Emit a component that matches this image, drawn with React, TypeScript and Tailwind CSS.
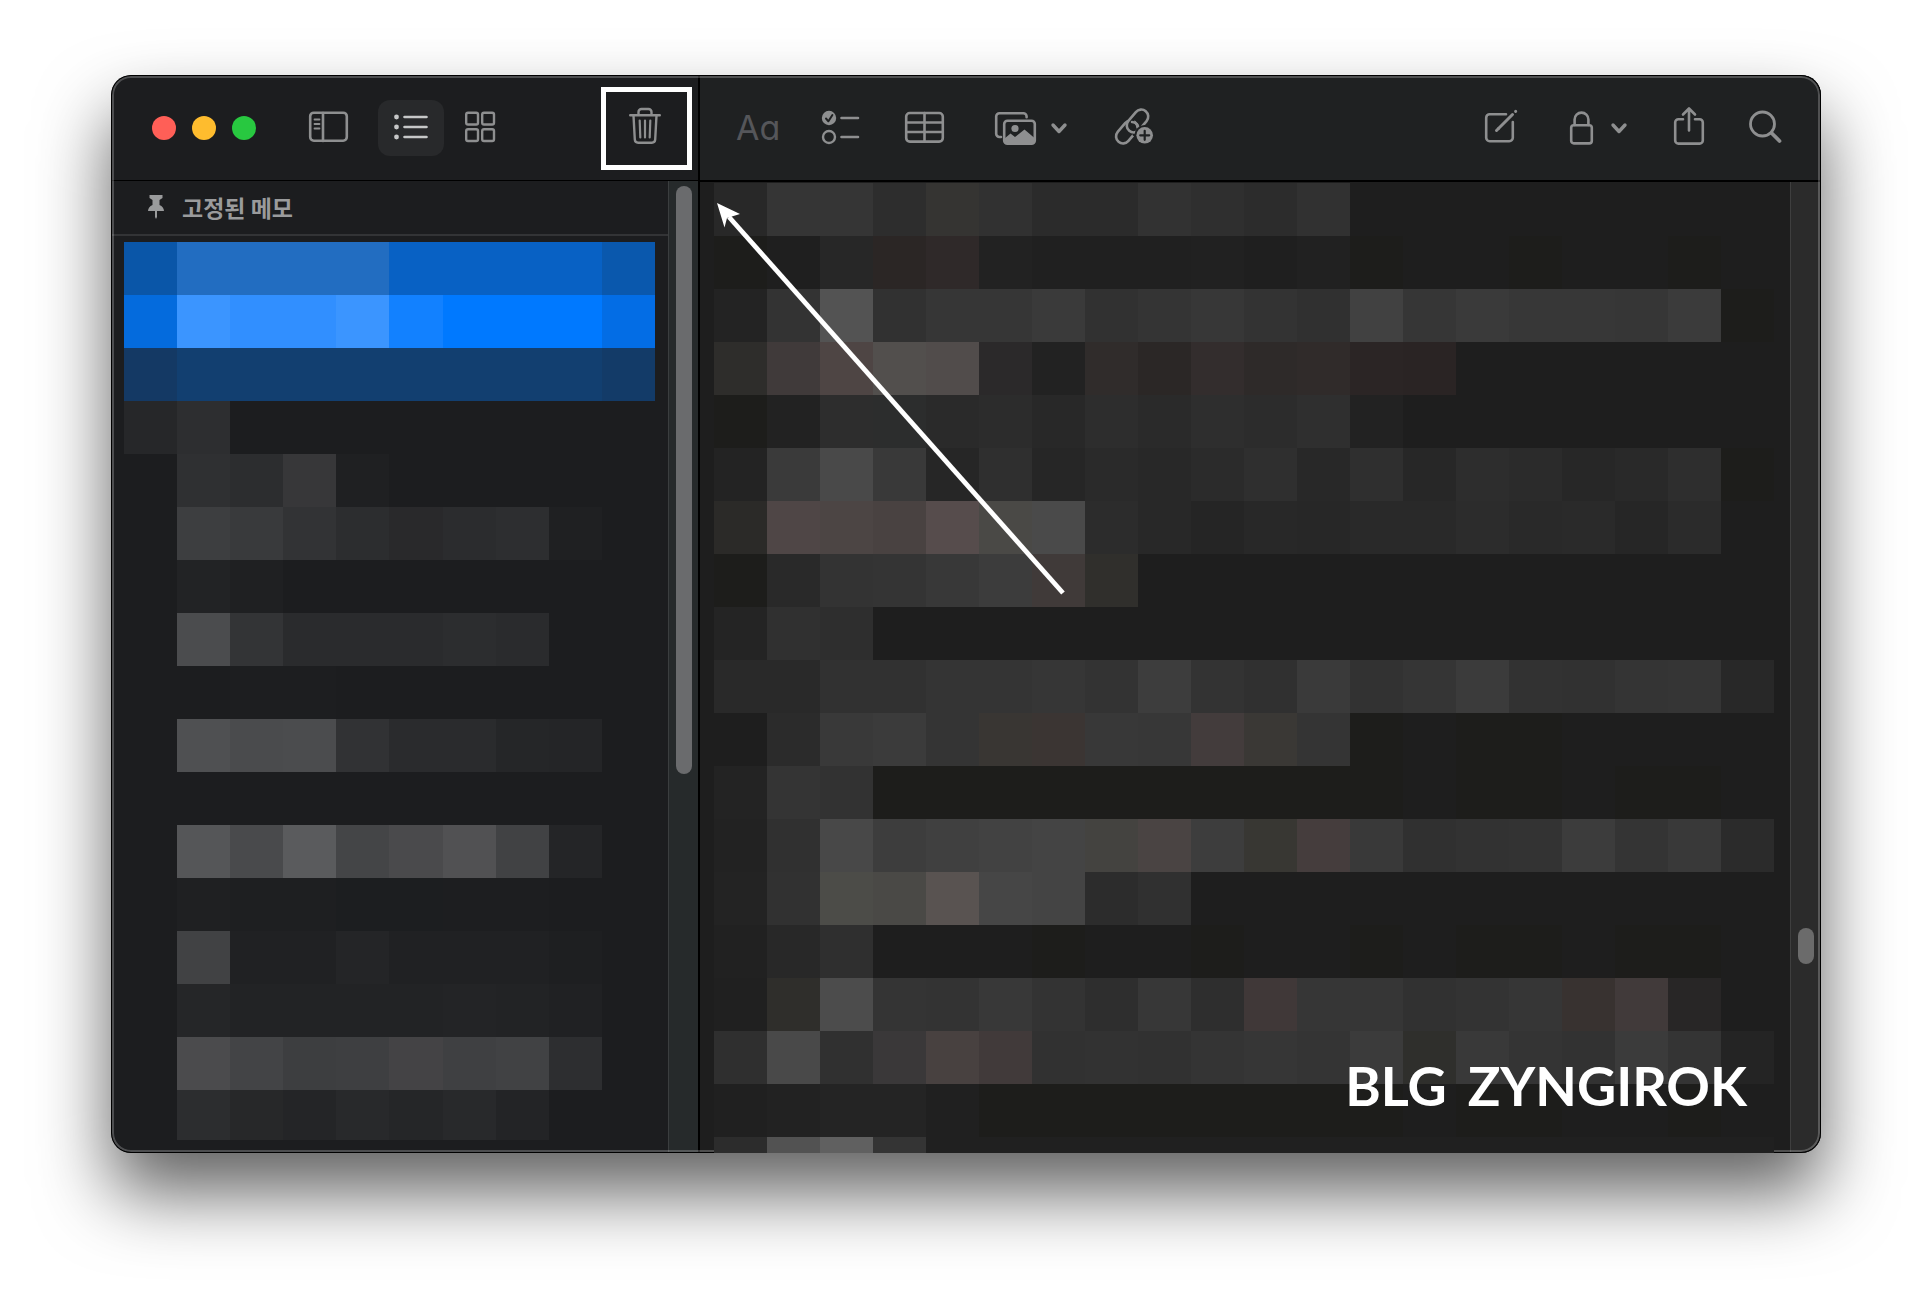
import type { ReactNode } from "react";

// One string per row of blocks, "." leaves the cell empty
const MEMO_BLOCKS = [
  "0a56a8 226dc1 226dc1 226dc1 226dc1 0861c4 0861c4 0861c4 0861c4 0a58ad",
  "046bdd 3b95ff 318fff 318fff 3b95ff 1281ff 0079ff 0079ff 0079ff 036de5",
  "143964 123f70 123f70 123f70 123f70 123f70 123f70 123f70 123f70 133b68",
  "262729 2d2e30 . . . . . . . .",
  ". 2f3032 2c2d2f 373739 1f2022 . . . . .",
  ". 3d3e40 393a3c 323335 2c2d2f 29292b 2b2c2e 2d2e30 1f2022 .",
  ". 222325 1f2022 . . . . . . .",
  ". 4b4c4e 333436 2a2b2d 2a2b2d 2a2b2d 2c2d2f 2a2b2d . .",
  ". . 1d1e20 1d1e20 . . . . . .",
  ". 4f5052 4a4b4d 4b4c4e 313234 2a2b2d 2a2b2d 252628 242527 .",
  ". . . . . . . . . .",
  ". 555658 494a4c 5a5b5d 444547 4a4a4c 515153 414244 242527 .",
  ". 1f2022 1e1f21 1e1f21 1c1e20 1c1e20 1d1e20 1d1e20 . .",
  ". 414244 202123 202123 242527 202123 202123 202123 1e1f21 .",
  ". 252628 222325 222325 222325 222325 232426 222325 202123 .",
  ". 4b4b4d 434446 3d3e40 3e3f41 444345 3f4042 414244 2d2e30 .",
  ". 2c2d2f 272829 242527 28292b 252628 28292b 232426 . .",
];

const NOTE_BLOCKS = [
  "282828 353535 353535 2d2d2d 353432 313131 2b2b2b 2b2b2b 323232 2f2f2f 2c2c2c 313131 . . . . . . . .",
  "1d1d1b 1f1f1f 272727 2b2625 2f2929 222222 202020 202020 202020 212121 1f1f1f 212121 1d1d1b . . 1d1d1b . . 1d1d1b .",
  "232323 333333 535353 313131 363636 363636 3a3a3a 313131 343434 373737 333333 303030 414141 363636 3a3a3a 373737 373737 363636 3b3b3b 1d1d1b",
  "2e2d2b 403a3a 4e4544 524f4d 514c4b 2b292a 222222 302c2b 2b2726 332d2d 2e2a29 302b2a 2b2525 2a2424 . . . . . .",
  "1d1d1b 222222 2d2d2d 2c2d2d 2a2a2a 2c2c2c 282828 2d2d2d 2a2a2a 2e2e2e 2c2c2c 2f2f2f 222222 . . . . . . .",
  "232323 3a3a3a 494949 393939 262626 2f2f2f 262626 2a2a2a 282828 2b2b2b 2f2f2f 282828 2f2f2f 272727 2d2d2d 2b2b2b 272727 292929 2e2e2e 1d1d1b",
  "2b2a28 4f4646 4c4544 494241 564c4c 4a4946 4a4a4a 2c2c2c 282828 252525 282828 272727 292929 292929 2c2c2c 292929 2a2a2a 262626 2b2b2b .",
  "1d1d1b 292929 333333 343434 383838 3c3c3c 403a39 302f2c . . . . . . . . . . . .",
  "242424 303030 2e2e2e . . . . . . . . . . . . . . . . .",
  "292929 292929 313131 313131 343434 343434 363636 333333 3d3d3d 333333 303030 3a3a3a 323232 353535 3b3b3b 323232 313131 343434 353535 282828",
  ". 2b2b2b 393939 3b3b3b 343434 393633 3b3533 383838 373737 433c3c 3a3835 343434 1d1d1b . 1d1d1b 1d1d1b . . . .",
  "232323 343434 323232 1d1d1b 1d1d1b 1d1d1b 1d1d1b 1d1d1b 1d1d1b 1d1d1b 1d1d1b 1d1d1b 1d1d1b . 1d1d1b 1d1d1b . 1d1d1b 1d1d1b .",
  "222222 303030 484848 3d3d3d 404040 424242 444444 444340 4a4443 3d3d3d 383733 453d3d 393939 303030 323232 333333 3c3c3c 343434 393939 2b2b2b",
  "232323 313131 4c4c48 4a4946 595351 464646 444444 2c2c2c 303030 . . . . . . . . . . .",
  "212121 282828 2f2f2f . . . 1d1d1b . . 1d1d1b . . 1d1d1b . 1d1d1b 1d1d1b . 1d1d1b 1d1d1b .",
  "202020 2f2e2b 4c4c4c 343434 333333 383838 333333 2e2e2e 373737 2e2e2e 403838 363636 363636 313131 333333 363636 383230 413a3a 282626 .",
  "2f2f2f 494949 303030 3a3839 484140 413a3a 313131 323232 313131 343434 363636 343434 3b3b3b 2f2f2c 393939 343434 323232 3b3b3b 343434 242424",
  "202020 222222 242424 242424 202020 1d1d1b 1d1d1b 1d1d1b 1d1d1b 1d1d1b 1d1d1b 1d1d1b 1d1d1b . 1d1d1b 1d1d1b . . 1d1d1b .",
  "2c2c2c 525252 606060 343434 202020 202020 202020 202020 202020 202020 202020 202020 202020 202020 202020 202020 202020 202020 202020 202020",
];

function Blocks({ rows, className, lastRow }: { rows: string[]; className: string; lastRow: string }) {
  return (
    <div className={`grid ${className}`} aria-hidden="true">
      {rows.map((row, y) =>
        row.split(" ").map((c, x) => (
          <div
            key={`${y}-${x}`}
            className={y === rows.length - 1 ? lastRow : "h-[53px]"}
            style={{ backgroundColor: c === "." ? undefined : `#${c}` }}
          />
        ))
      )}
    </div>
  );
}

function Icon({ width, children }: { width: number; children: ReactNode }) {
  return (
    <svg
      width={width}
      height={42}
      viewBox={`0 0 ${width} 42`}
      fill="none"
      stroke="currentColor"
      strokeWidth="2.6"
      strokeLinecap="round"
      strokeLinejoin="round"
      className="block shrink-0 overflow-visible"
      aria-hidden="true"
    >
      {children}
    </svg>
  );
}

function ToolButton({ label, className = "", children }: { label: string; className?: string; children: ReactNode }) {
  return (
    <button type="button" aria-label={label} className={`flex shrink-0 items-center justify-center ${className}`}>
      {children}
    </button>
  );
}

function Chevron() {
  return (
    <Icon width={16}>
      <path d="M2 18l6 6.5 6-6.5" strokeWidth="3.4" />
    </Icon>
  );
}

function SidebarToolbar() {
  return (
    <div className="flex h-[106px] items-center border-b border-black pt-px pl-[41px] pr-1.5 text-[#8e8f90]">
      <div className="flex gap-4">
        <button type="button" aria-label="닫기" className="size-6 rounded-full bg-[#ff5f57]" />
        <button type="button" aria-label="최소화" className="size-6 rounded-full bg-[#febc2e]" />
        <button type="button" aria-label="확대" className="size-6 rounded-full bg-[#28c840]" />
      </div>

      <ToolButton label="폴더 보기" className="ml-[53px]">
        <Icon width={39}>
          <rect x="1.2" y="5.7" width="36.6" height="28" rx="3.6" />
          <path d="M14 6v28" />
          <path d="M5.5 12.5h5M5.5 17h5M5.5 21.5h5" strokeWidth="1.8" />
        </Icon>
      </ToolButton>
      <ToolButton label="목록으로 보기" className="ml-[30px] h-14 w-[66px] rounded-xl bg-[#28292b] text-[#c6c7c8]">
        <Icon width={33}>
          <path d="M9.5 10h22M9.5 20h22M9.5 30h22" />
          <g fill="currentColor" stroke="none">
            <circle cx="1.5" cy="10" r="2.4" />
            <circle cx="1.5" cy="20" r="2.4" />
            <circle cx="1.5" cy="30" r="2.4" />
          </g>
        </Icon>
      </ToolButton>
      <ToolButton label="갤러리로 보기" className="ml-[21px]">
        <Icon width={30}>
          <g strokeWidth="2.4">
            <rect x="1.2" y="5.7" width="11.8" height="11.8" rx="1.8" />
            <rect x="17.2" y="5.7" width="11.8" height="11.8" rx="1.8" />
            <rect x="1.2" y="22.2" width="11.8" height="11.8" rx="1.8" />
            <rect x="17.2" y="22.2" width="11.8" height="11.8" rx="1.8" />
          </g>
        </Icon>
      </ToolButton>

      <div className="ml-auto flex h-[83px] w-[91px] items-center justify-center border-5 border-white">
        <ToolButton label="삭제" className="pr-1">
          <Icon width={32}>
            <path d="M1.2 8.2h29.600M9.500 8V5a3 3 0 0 1 3-3h7a3 3 0 0 1 3 3v3" strokeWidth="2.4" />
            <path d="M4.500 8.500l1.300 24a3.400 3.400 0 0 0 3.400 3.200h13.600a3.400 3.400 0 0 0 3.400-3.200l1.300-24" strokeWidth="2.4" />
            <path d="M10.700 13.500l.6 17M16 13.500v17M21.300 13.500l-.6 17" strokeWidth="2.2" />
          </Icon>
        </ToolButton>
      </div>
    </div>
  );
}

function NoteToolbar() {
  return (
    <div className="flex h-[107px] items-center border-b-2 border-black bg-[#1f2122] pt-px pl-9 pr-10 text-[#8e8f90]">
      <button
        type="button"
        aria-label="서식"
        className="w-[42px] text-left font-['Inter',sans-serif] text-[34px] leading-10 text-[#55565a] [font-feature-settings:'cv11']"
      >
        Aa
      </button>
      <ToolButton label="체크리스트" className="ml-11">
        <Icon width={37}>
          <circle cx="7" cy="11" r="7.2" fill="currentColor" stroke="none" />
          <path d="M4 11.5l2.4 2.8L10.4 8" stroke="#1f2122" strokeWidth="2" />
          <circle cx="7" cy="30" r="6" strokeWidth="2.4" />
          <path d="M19.5 11h16.5M19.5 30h16.5" />
        </Icon>
      </ToolButton>
      <ToolButton label="표" className="ml-[46px]">
        <Icon width={39}>
          <rect x="1.2" y="6" width="36.6" height="28.6" rx="3.6" />
          <path d="M19.5 6v28.5M1.5 15.5h36M1.5 25h36" />
        </Icon>
      </ToolButton>
      <ToolButton label="미디어" className="ml-[51px] gap-[15px]">
        <Icon width={41}>
          <path d="M6 30H4.5a3.3 3.3 0 0 1-3.3-3.3V9.500a3.300 3.300 0 0 1 3.300-3.300h23.800a3.300 3.300 0 0 1 3.300 3.300v.7" />
          <rect x="9.2" y="13.7" width="30.6" height="23" rx="3.3" />
          <circle cx="20" cy="21.5" r="3.6" fill="currentColor" stroke="none" />
          <path
            d="M9.500 31.500l6-5 4.500 3.500 9.500-7.500 10 8.500v2.500a3 3 0 0 1-3 3h-24a3 3 0 0 1-3-3z"
            fill="currentColor"
            stroke="none"
          />
        </Icon>
        <Chevron />
      </ToolButton>
      <ToolButton label="링크 추가" className="ml-12">
        <Icon width={38}>
          <rect x="-12.8" y="-7" width="25.6" height="14" rx="7" transform="translate(11.8 25) rotate(-50)" />
          <path d="M13 19l4-5M20 27l3-4" stroke="#1f2122" strokeWidth="5" />
          <rect x="-12.8" y="-7" width="25.6" height="14" rx="7" transform="translate(22.5 14) rotate(-50)" />
          <path d="M17 15c4 0 7 3 6 7.500" />
          <circle cx="29.7" cy="28.3" r="10.3" fill="#1f2122" stroke="none" />
          <circle cx="29.7" cy="28.3" r="8.3" fill="currentColor" stroke="none" />
          <path d="M29.7 23.8v9M25.2 28.3h9" stroke="#1f2122" strokeWidth="2.2" />
        </Icon>
      </ToolButton>

      <ToolButton label="새로운 메모" className="ml-auto">
        <Icon width={33}>
          <path d="M21 7.2H4.700a3.500 3.500 0 0 0-3.500 3.500v20a3.500 3.500 0 0 0 3.500 3.500h19.600a3.500 3.500 0 0 0 3.500-3.500V15" />
          <path d="M13.5 21.5L27.5 7.5" strokeWidth="3" />
          <path d="M11.5 23.5l2-2M30.6 4.400l.1-.1" strokeWidth="3" />
        </Icon>
      </ToolButton>
      <ToolButton label="잠금" className="ml-[52px] gap-[18px]">
        <Icon width={23}>
          <rect x="1.2" y="18.2" width="20.6" height="18.2" rx="2.6" />
          <path d="M4.6 18v-5.5a6.900 6.900 0 0 1 13.800 0V18" />
        </Icon>
        <Chevron />
      </ToolButton>
      <ToolButton label="공유" className="ml-[47px]">
        <Icon width={30}>
          <path d="M9 12.200H4.400a3.200 3.200 0 0 0-3.200 3.200v18a3.200 3.200 0 0 0 3.200 3.200h21.200a3.200 3.200 0 0 0 3.200-3.200v-18a3.200 3.200 0 0 0-3.200-3.200H21" />
          <path d="M15 23.500V1.800M9 7.500l6-6 6 6" />
        </Icon>
      </ToolButton>
      <ToolButton label="검색" className="ml-[45px]">
        <Icon width={32}>
          <circle cx="13.5" cy="17" r="12" strokeWidth="2.8" />
          <path d="M22.5 26l8 8" strokeWidth="3.8" />
        </Icon>
      </ToolButton>
    </div>
  );
}

export default function App() {
  return (
    <div className="bg-white px-[111px] pt-[75px] pb-[147px]">
      <main className="relative flex overflow-hidden rounded-[20px] bg-[#1c1d1f] shadow-[0_40px_72px_rgba(0,0,0,0.62)]">
        {/* Memo list */}
        <aside className="flex w-[589px] shrink-0 flex-col border-r-2 border-black">
          <SidebarToolbar />
          <div className="flex flex-1">
            <div className="min-w-0 flex-1">
              <h2 className="flex h-[55px] items-center gap-[18px] border-b-2 border-[#333436] pb-0.5 pl-[37px] font-['Noto_Sans_CJK_KR',sans-serif] text-[23px] leading-7 font-bold text-[#9a9b9c]">
                <svg width="16" height="24" viewBox="0 0 16 24" fill="currentColor" aria-hidden="true">
                  <path d="M1.500 0h13v3l-3 2v5c2.800 1.200 4.500 3.500 4.500 6H9v6l-1 2-1-2v-6H0c0-2.500 1.700-4.800 4.500-6V5l-3-2z" />
                </svg>
                고정된 메모
              </h2>
              <Blocks rows={MEMO_BLOCKS} className="grid-cols-10 pt-1.5 pr-[13px] pl-[13px]" lastRow="h-[50px]" />
            </div>
            <div className="w-[30px] shrink-0 border-l border-[#3b3e3f] bg-[#262a2b] pt-[5px] pl-[7px]">
              <div className="h-[588px] w-4 rounded-full bg-[#6a6b6d]" />
            </div>
          </div>
        </aside>

        {/* Open note */}
        <section className="flex min-w-0 flex-1 flex-col bg-[#1e1e1e]">
          <NoteToolbar />
          <div className="flex flex-1">
            <Blocks
              rows={NOTE_BLOCKS}
              className="relative z-10 min-w-0 flex-1 grid-cols-20 pt-px pr-4 pl-3.5"
              lastRow="h-4"
            />
            <div className="w-[31px] shrink-0 border-l border-[#3f3f3f] bg-[#2b2b2b] pt-[746px] pl-[7px]">
              <div className="h-9 w-4 rounded-full bg-[#6b6b6b]" />
            </div>
          </div>
        </section>

        {/* Window rim */}
        <div className="pointer-events-none absolute inset-0 rounded-[20px] border border-black inset-shadow-[0_0_0_2px_rgba(255,255,255,0.22)]" />

        {/* Pointer towards the delete button */}
        <svg
          width="350"
          height="394"
          viewBox="0 0 350 394"
          className="pointer-events-none absolute top-[128px] left-[606px] z-20"
          aria-hidden="true"
        >
          <path d="M12 14L346 390" stroke="#fff" strokeWidth="4.8" />
          <path d="M0 0l23 11-13 4-2.500 9.500z" fill="#fff" />
        </svg>

        <p className="absolute right-[74px] bottom-[35px] z-20 flex gap-[21px] font-['Lato',sans-serif] text-[54px] leading-[64px] font-bold text-white">
          <span>BLG</span> <span>ZYNGIROK</span>
        </p>
      </main>
    </div>
  );
}
